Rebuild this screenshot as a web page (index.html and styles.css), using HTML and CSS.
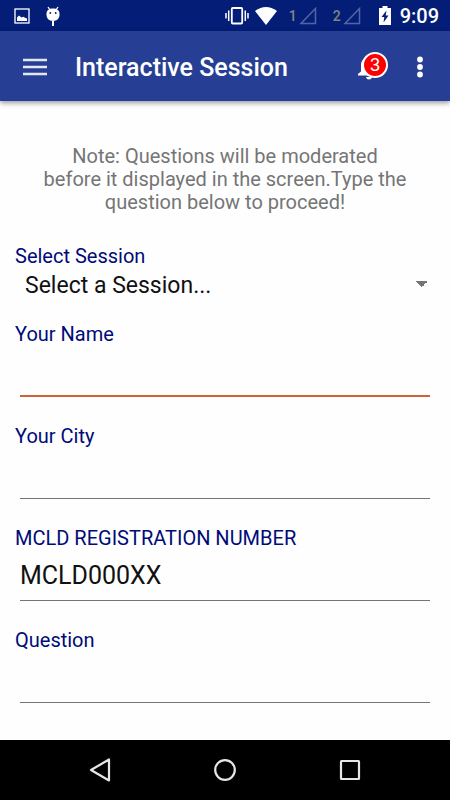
FILE: index.html
```html
<!DOCTYPE html>
<html lang="en">
<head>
  <meta charset="utf-8">
  <meta name="viewport" content="width=device-width, initial-scale=1">
  <title>Interactive Session</title>
  <link rel="stylesheet" href="styles.css">
</head>
<body>

  <div class="status-bar">
    <svg class="picture-icon" width="16" height="16" viewBox="0 0 16 16">
      <rect x="1" y="1" width="14" height="14" fill="none" stroke="#fff" stroke-width="1.3"/>
      <path d="M3 13V9.5L5 7.5L7.5 9.5L9.5 8.8L11 9.8L13 10.5V13Z" fill="#fff"/>
    </svg>
    <svg width="16" height="22" viewBox="0 0 16 22">
      <path d="M3 2L5 5M13 2L11 5" stroke="#fff" stroke-width="1.3"/>
      <path d="M1.5 8.5C1.5 5.5 4 3.5 8 3.5S14.5 5.5 14.5 8.5V10C14.5 13 12 16 8 16S1.5 13 1.5 10Z" fill="#fff"/>
      <path d="M8 16V21" stroke="#fff" stroke-width="2"/>
      <circle cx="5.3" cy="8" r="0.9" fill="#041e78"/>
      <circle cx="10.7" cy="8" r="0.9" fill="#041e78"/>
    </svg>

    <div class="status-right">
      <svg width="24" height="20" viewBox="0 0 24 20">
        <rect x="6.8" y="2" width="10.4" height="15.5" rx="1" fill="none" stroke="#fff" stroke-width="1.8"/>
        <path d="M3.7 4.5V15M1 7V12.5M20.3 4.5V15M23 7V12.5" stroke="#fff" stroke-width="1.5"/>
      </svg>
      <svg width="22" height="18" viewBox="0 0 22 18">
        <path d="M11 18L0 4Q11 -4 22 4Z" fill="#fff"/>
      </svg>
      <span class="sim">1
        <svg width="18" height="18" viewBox="0 0 18 18"><path d="M16.5 1.5V16.5H2Z" fill="none" stroke="#5364a5" stroke-width="1.5"/></svg>
      </span>
      <span class="sim">2
        <svg width="18" height="18" viewBox="0 0 18 18"><path d="M16.5 1.5V16.5H2Z" fill="none" stroke="#5364a5" stroke-width="1.5"/></svg>
      </span>
      <svg class="battery" width="12" height="20" viewBox="0 0 12 20">
        <path d="M3.5 0H8.5V2H12V19H0V2H3.5Z" fill="#fff"/>
        <path d="M7.5 4.5L2.5 11H5.3L4.5 16.5L9.5 9.5H6.7Z" fill="#041e78"/>
      </svg>
      <span class="clock">9:09</span>
    </div>
  </div>

  <header class="app-bar">
    <button class="icon-button" type="button" aria-label="Menu">
      <svg width="24" height="18" viewBox="0 0 24 18">
        <path d="M0 2H24M0 9H24M0 16H24" stroke="#e4e7f1" stroke-width="2.5"/>
      </svg>
    </button>
    <h1>Interactive Session</h1>
    <button class="icon-button bell" type="button" aria-label="Notifications">
      <svg width="24" height="28" viewBox="0 0 24 28">
        <path d="M0 22.5V21L3 18.5V12C3 7 6.500 4.500 11 4.500S19 8 19 12V18.500L21 22.500Z" fill="#fff"/>
        <path d="M8 24H14Q13.500 26.500 11 26.500T8 24Z" fill="#fff"/>
      </svg>
      <span class="badge">3</span>
    </button>
    <button class="icon-button" type="button" aria-label="More options">
      <svg width="6" height="22" viewBox="0 0 6 22">
        <circle cx="3" cy="3.5" r="2.9" fill="#fff"/>
        <circle cx="3" cy="11" r="2.9" fill="#fff"/>
        <circle cx="3" cy="18.5" r="2.9" fill="#fff"/>
      </svg>
    </button>
  </header>

  <main class="content">
    <p class="note">Note: Questions will be moderated before it displayed in the screen.Type the question below to proceed!</p>

    <form>
      <div class="form-group session">
        <label for="session">Select Session</label>
        <select id="session">
          <option>Select a Session...</option>
        </select>
      </div>
      <div class="form-group">
        <label for="name">Your Name</label>
        <input class="active" type="text" id="name">
      </div>
      <div class="form-group">
        <label for="city">Your City</label>
        <input type="text" id="city">
      </div>
      <div class="form-group">
        <label for="registration">MCLD REGISTRATION NUMBER</label>
        <input type="text" id="registration" value="MCLD000XX">
      </div>
      <div class="form-group">
        <label for="question">Question</label>
        <input type="text" id="question">
      </div>
    </form>
  </main>

  <nav class="nav-bar">
    <button type="button" aria-label="Back">
      <svg width="24" height="26" viewBox="0 0 24 26"><path d="M21 2.5V23.5L3 13Z" fill="none" stroke="#e6e6e6" stroke-width="2.2" stroke-linejoin="round"/></svg>
    </button>
    <button type="button" aria-label="Home">
      <svg width="24" height="24" viewBox="0 0 24 24"><circle cx="12" cy="12" r="9.8" fill="none" stroke="#e6e6e6" stroke-width="2.2"/></svg>
    </button>
    <button type="button" aria-label="Recent apps">
      <svg width="24" height="24" viewBox="0 0 24 24"><rect x="3" y="3" width="18" height="18" rx="0.5" fill="none" stroke="#e6e6e6" stroke-width="2.2"/></svg>
    </button>
  </nav>

</body>
</html>
```

FILE: styles.css
```css
* {
  box-sizing: border-box;
}

body {
  margin: 0;
  min-height: 100vh;
  display: flex;
  flex-direction: column;
  font-family: Roboto, sans-serif;
  background-color: #fefefe;
}

svg {
  display: block;
  flex: none;
}

button {
  display: flex;
  align-items: center;
  justify-content: center;
  padding: 0;
  border: none;
  background: none;
  cursor: pointer;
}

.status-bar {
  height: 31px;
  padding: 0 11px 0 14px;
  display: flex;
  align-items: center;
  gap: 15px;
  background-color: #041e78;
  color: #fff;
}

.status-right {
  margin-left: auto;
  display: flex;
  align-items: center;
  gap: 6px;
}

.sim {
  display: flex;
  align-items: center;
  gap: 2px;
  margin-left: 6px;
  color: #85857f;
  font-size: 14px;
  font-weight: 500;
}

.sim + .sim {
  margin-left: 10px;
}

.battery {
  margin-left: 12px;
}

.clock {
  margin-left: 3px;
  font-size: 20px;
  font-weight: 500;
}

.app-bar {
  height: 70px;
  padding: 2px 20px 0 15px;
  display: flex;
  align-items: center;
  gap: 20px;
  background-color: #263f94;
  box-shadow: 0 2px 5px rgba(0, 0, 0, 0.4);
}

.app-bar h1 {
  flex: 1;
  margin: 0;
  color: #fff;
  font-size: 25px;
  font-weight: 500;
}

.icon-button {
  min-width: 20px;
  height: 40px;
}

.icon-button:first-child {
  width: 40px;
}

.bell {
  position: relative;
  width: 32px;
  justify-content: flex-start;
}

.badge {
  position: absolute;
  top: 5px;
  left: 4px;
  width: 26px;
  height: 26px;
  border: 2px solid #fff;
  border-radius: 50%;
  background-color: #f00;
  color: #fff;
  font-size: 18px;
  line-height: 22px;
  text-align: center;
}

.content {
  flex: 1;
  padding: 44px 15px 20px;
}

.note {
  margin: 0 27px 30px;
  color: #757575;
  font-size: 20px;
  line-height: 23px;
  text-align: center;
}

.form-group {
  display: flex;
  flex-direction: column;
  margin-bottom: 27px;
}

.form-group:last-child {
  margin-bottom: 0;
}

.session {
  margin-bottom: 20px;
}

label {
  color: #000b78;
  font-size: 20px;
  line-height: 24px;
}

input {
  height: 51px;
  margin: 0 5px;
  padding: 1px 0 0;
  border: none;
  border-bottom: 1px solid #757575;
  border-radius: 0;
  outline: none;
  background: none;
  color: #111;
  font-family: inherit;
  font-size: 25px;
}

input.active,
input:focus {
  border-bottom: 2px solid #d0623a;
}

/* the two gradients are the halves of the drop-down arrow */
select {
  height: 34px;
  padding: 0 10px;
  border: none;
  outline: none;
  appearance: none;
  background-color: transparent;
  background-image: linear-gradient(to top right, transparent 50%, #757575 50%), linear-gradient(to top left, transparent 50%, #757575 50%);
  background-size: 6px 6px;
  background-position: right 13px top 13px, right 7px top 13px;
  background-repeat: no-repeat;
  color: #111;
  font-family: inherit;
  font-size: 23px;
}

.nav-bar {
  height: 60px;
  padding: 0 37px;
  display: grid;
  grid-template-columns: repeat(3, 1fr);
  background-color: #000;
}
```
